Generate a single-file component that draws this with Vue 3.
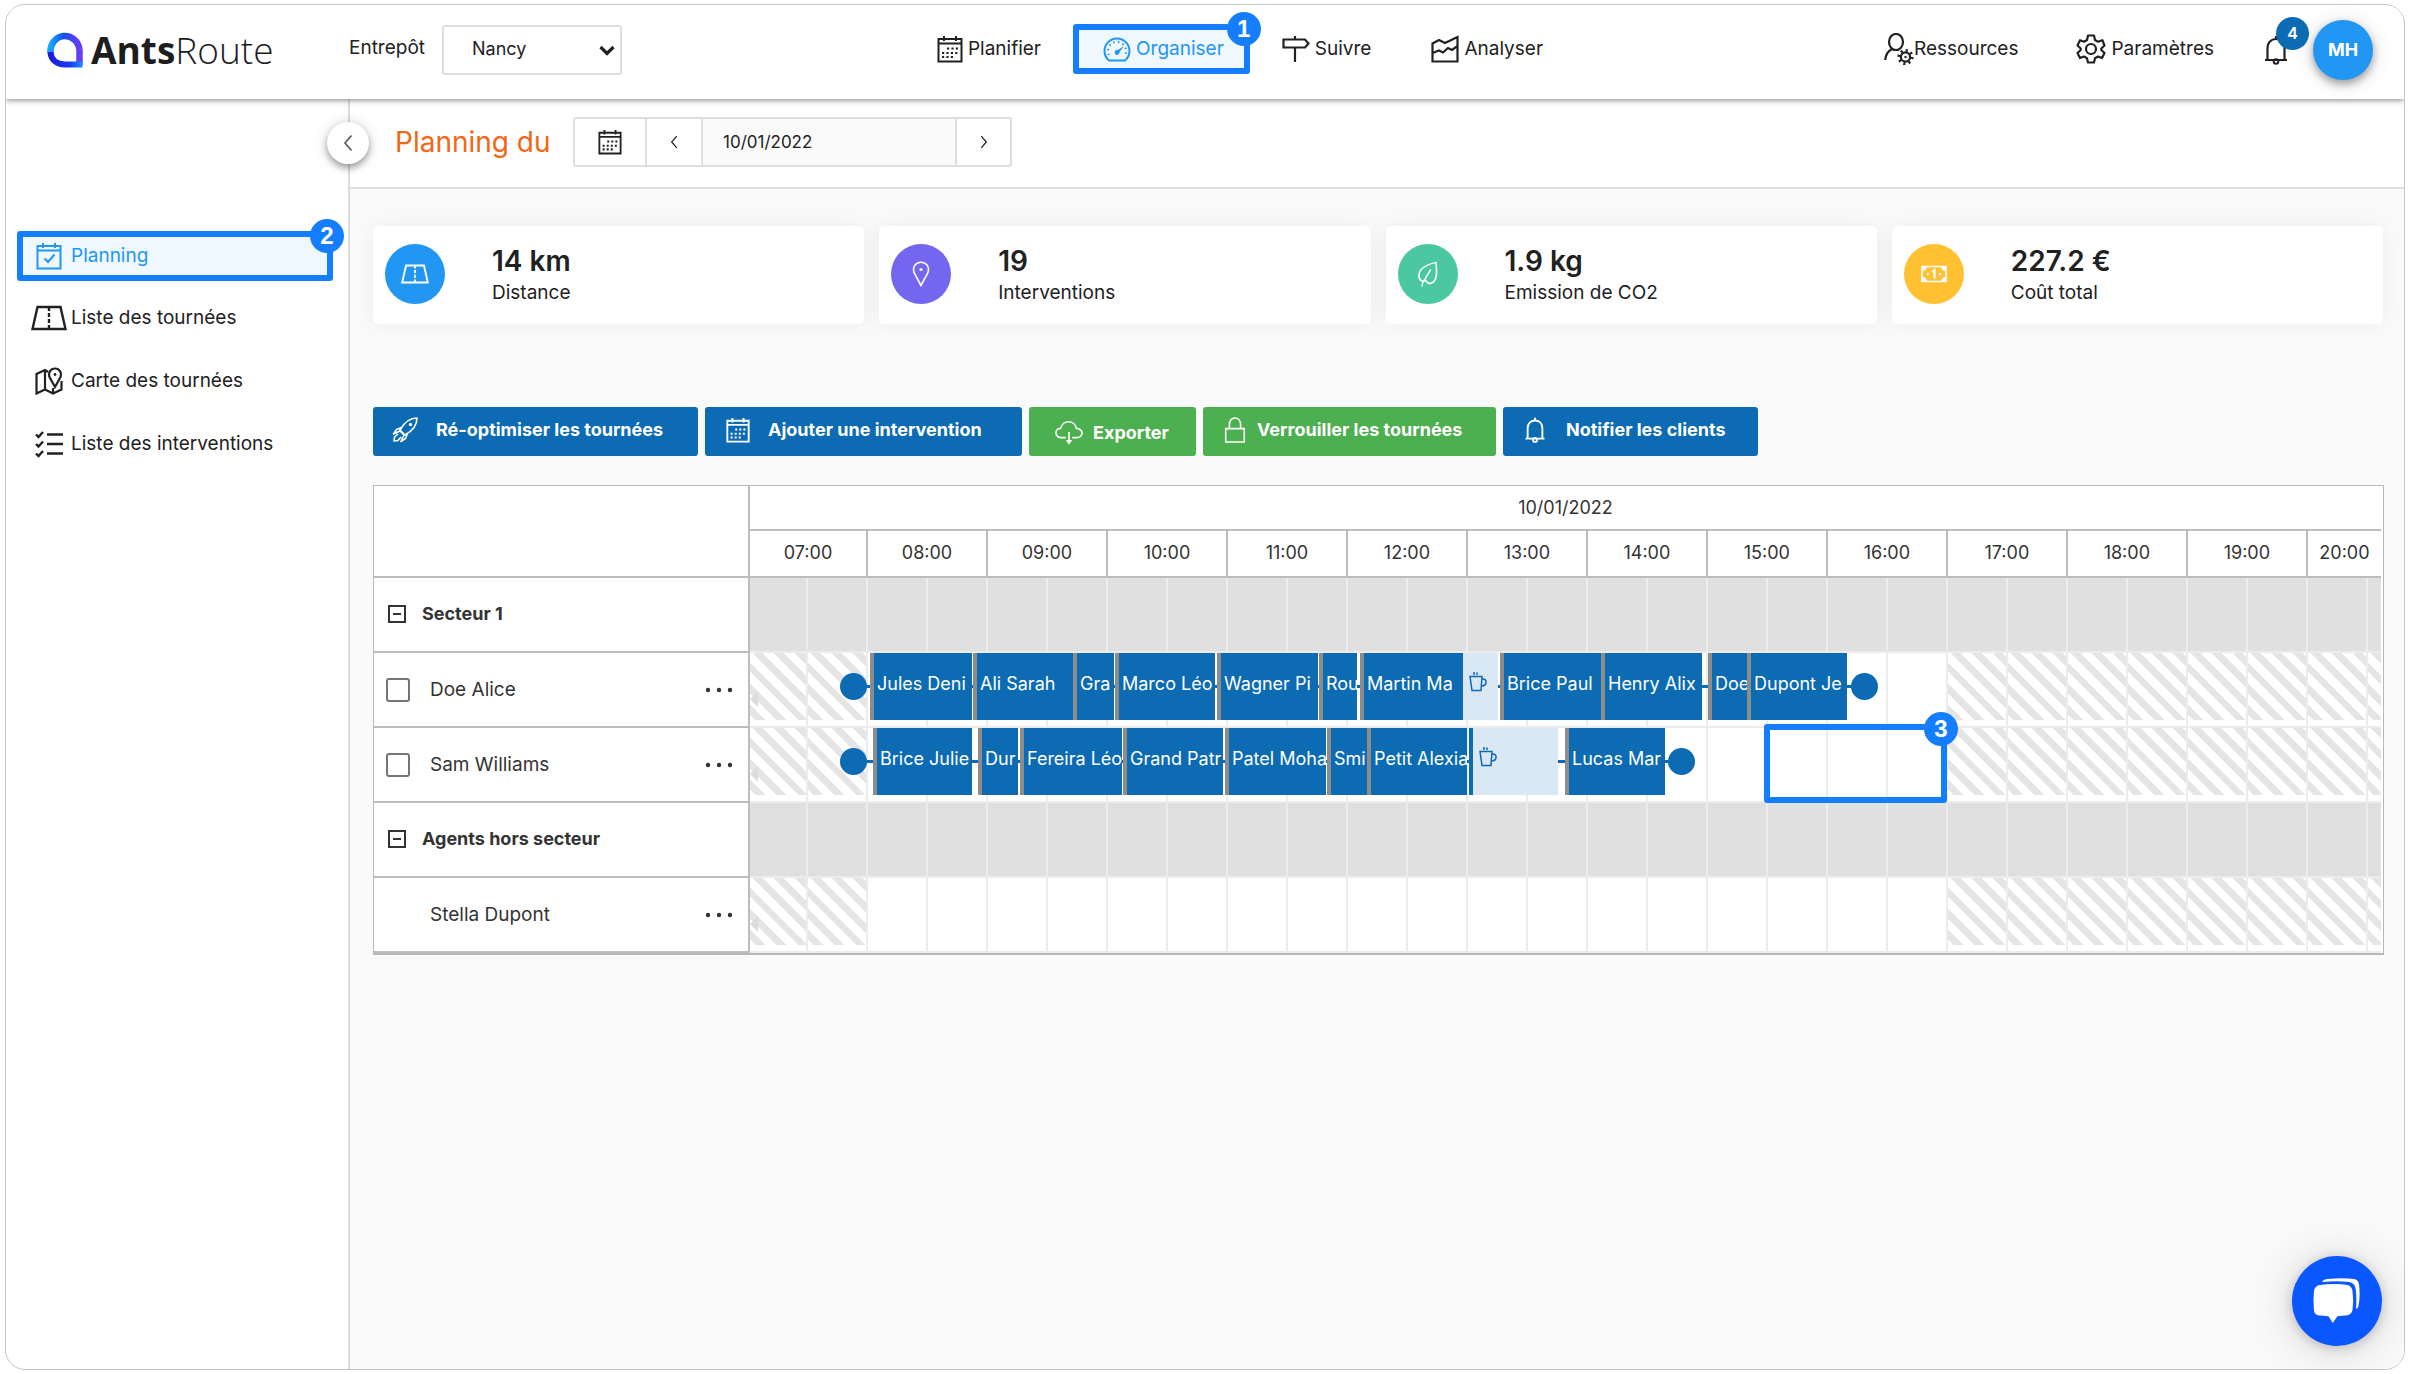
<script setup>
import { ref } from 'vue'

const depot = ref('Nancy')
const day = ref('10/01/2022')

const sideLinks = [
  { icon: 'i-calcheck', label: 'Planning', active: true },
  { icon: 'i-road', label: 'Liste des tournées' },
  { icon: 'i-map', label: 'Carte des tournées' },
  { icon: 'i-list', label: 'Liste des interventions' }
]

const stats = [
  { icon: 'i-road', tone: 'blue', value: '14 km', label: 'Distance' },
  { icon: 'i-pin', tone: 'violet', value: '19', label: 'Interventions' },
  { icon: 'i-leaf', tone: 'teal', value: '1.9 kg', label: 'Emission de CO2' },
  { icon: 'i-money', tone: 'amber', value: '227.2 €', label: 'Coût total' }
]

const hours = ['07:00', '08:00', '09:00', '10:00', '11:00', '12:00', '13:00', '14:00', '15:00', '16:00', '17:00', '18:00', '19:00', '20:00']

// The visible axis is cut into half-minute ticks, starting just after 07:00.
const TICKS = 1631
const pct = (t) => (t / TICKS) * 100 + '%'
const span = (from, to) => ({ left: pct(from), width: pct(to - from) })

const slots = []
for (let edge = 0, next = 58; edge < TICKS; edge = next, next = Math.min(next + 60, TICKS)) {
  slots.push({ size: next - edge, closed: next <= 118 || edge >= 1198, last: next === TICKS })
}

const rows = [
  { type: 'sector', name: 'Secteur 1' },
  {
    type: 'agent', name: 'Doe Alice', check: true, from: 103, to: 1114,
    visits: [
      [120, 222, 'Jules Deni'], [223, 323, 'Ali Sarah'], [323, 364, 'Gra'], [365, 465, 'Marco Léo'],
      [467, 568, 'Wagner Pi'], [569, 607, 'Rou'], [610, 713, 'Martin Ma'],
      [750, 851, 'Brice Paul'], [851, 952, 'Henry Alix'], [958, 997, 'Doe'], [997, 1097, 'Dupont Je']
    ],
    pause: [713, 748]
  },
  {
    type: 'agent', name: 'Sam Williams', check: true, from: 103, to: 931, slot: true,
    visits: [
      [123, 222, 'Brice Julie'], [228, 268, 'Dur'], [270, 372, 'Fereira Léo'], [373, 473, 'Grand Patr'],
      [475, 576, 'Patel Moha'], [577, 617, 'Smi'], [617, 717, 'Petit Alexia'], [815, 915, 'Lucas Mar']
    ],
    stub: [719, 723],
    pause: [723, 808]
  },
  { type: 'sector', name: 'Agents hors secteur' },
  { type: 'agent', name: 'Stella Dupont', check: false, visits: [] }
]
</script>

<template>
  <svg class="defs" aria-hidden="true">
    <symbol id="i-cal" viewBox="0 0 26 28">
      <path d="M1.500 4H24.500V26.500H1.500ZM1.500 8.500H24.500M7 1V6M19 1V6" fill="none" stroke="currentColor" stroke-width="2" />
      <path d="M10 13.500H22M5 18H22M5 22H16" fill="none" stroke="currentColor" stroke-width="2.200" stroke-dasharray="2.200 2.200" />
    </symbol>
    <symbol id="i-calcheck" viewBox="0 0 26 28">
      <path d="M1.500 4H24.500V26.500H1.500ZM1.500 8.500H24.500M7 1V6M19 1V6M8.500 16.500L12 20L18.500 12.500" fill="none" stroke="currentColor" stroke-width="2" />
    </symbol>
    <symbol id="i-gauge" viewBox="0 0 28 26">
      <path d="M6 24.500A12.500 12.500 0 1 1 22 24.500Z" fill="none" stroke="currentColor" stroke-width="2" stroke-linejoin="round" />
      <path d="M6 19A9 9 0 1 1 22 19" fill="none" stroke="currentColor" stroke-width="2" stroke-dasharray="1.500 3.300" />
      <path d="M12.500 15.500L21 10L15.500 17.500Z" fill="currentColor" />
      <circle cx="14" cy="16.500" r="2.400" fill="currentColor" />
    </symbol>
    <symbol id="i-sign" viewBox="0 0 28 28">
      <path d="M1.500 4.500H23L26.500 8.500L23 12.500H1.500ZM13 1V4.500M13 12.500V27" fill="none" stroke="currentColor" stroke-width="2.200" />
    </symbol>
    <symbol id="i-chart" viewBox="0 0 28 28">
      <path d="M1.500 8.500L8 5L14 8L26.500 2V26.500H1.500ZM1.500 18L8 15.500L12 17.500L17 13L21 15L26.500 11" fill="none" stroke="currentColor" stroke-width="2.200" />
    </symbol>
    <symbol id="i-usercog" viewBox="0 0 30 32">
      <ellipse cx="12" cy="9" rx="7" ry="8" fill="none" stroke="currentColor" stroke-width="2.200" />
      <path d="M8 16Q2 19 1.200 27" fill="none" stroke="currentColor" stroke-width="2.200" />
      <circle cx="21.500" cy="24" r="4.600" fill="none" stroke="currentColor" stroke-width="2.200" />
      <circle cx="21.500" cy="24" r="6.600" fill="none" stroke="currentColor" stroke-width="3" stroke-dasharray="2.100 3.080" />
      <circle cx="21.500" cy="24" r="1.200" fill="currentColor" />
    </symbol>
    <symbol id="i-gear" viewBox="0 0 30 30">
      <path d="M12 1.500H18L19 6L22 7.700L26.400 6.200L28.500 11.500L25.300 14.500V16L28.500 19L26 24L22 22.500L19 24.200L18 28.500H12L11 24.200L8 22.500L4 24L1.500 19L4.700 16V14.500L1.500 11.500L4 6.200L8 7.700L11 6Z" fill="none" stroke="currentColor" stroke-width="2.200" stroke-linejoin="round" />
      <circle cx="15" cy="15" r="5" fill="none" stroke="currentColor" stroke-width="2.200" />
    </symbol>
    <symbol id="i-bell" viewBox="0 0 24 30">
      <path d="M1 25H23M3.500 25V13C3.500 7.500 7 4 12 4S20.500 7.500 20.500 13V25M12 1V4" fill="none" stroke="currentColor" stroke-width="2.200" />
      <circle cx="12" cy="26.500" r="2.300" fill="none" stroke="currentColor" stroke-width="2" />
    </symbol>
    <symbol id="i-road" viewBox="0 0 36 26">
      <path d="M6.500 2H29.500L34.500 24H1.500ZM18 3V6M18 8V12M18 14V18M18 20V24" fill="none" stroke="currentColor" stroke-width="2.400" />
    </symbol>
    <symbol id="i-map" viewBox="0 0 28 28">
      <path d="M13 5L10 3L1.500 7V26.500L10 22.500L18 26.500L26.500 22.500V14M10 3V22.500M18 21V26" fill="none" stroke="currentColor" stroke-width="2.200" />
      <path d="M20 20L15 11C12.500 6 15.500 1.500 20 1.500S27.500 6 25 11Z" fill="none" stroke="currentColor" stroke-width="2.200" />
      <circle cx="20" cy="7.500" r="1.400" fill="currentColor" />
    </symbol>
    <symbol id="i-list" viewBox="0 0 28 26">
      <path d="M12 3.500H28M12 13H28M12 22.500H28M1 3.500L3.500 6L8 1M1 13L3.500 15.500L8 10.500M1 22.500L3.500 25L8 20" fill="none" stroke="currentColor" stroke-width="2.400" />
    </symbol>
    <symbol id="i-pin" viewBox="0 0 18 26">
      <path d="M9 24.500L2.500 12.500C-0.500 6 4 1.200 9 1.200S18.500 6 15.500 12.500Z" fill="none" stroke="currentColor" stroke-width="1.600" />
      <circle cx="9" cy="8.500" r="1.600" fill="currentColor" />
    </symbol>
    <symbol id="i-leaf" viewBox="0 0 24 28">
      <path d="M20.500 1.500C10 4 2 9 2.200 16C2.500 21.500 7 23 9 20.500C11 24 14.500 25.500 18 22.500C23 17.500 21 8 20.500 1.500Z" fill="none" stroke="currentColor" stroke-width="1.600" />
      <path d="M15 9L9 19C6.500 22 5.500 24 5.500 27.500" fill="none" stroke="currentColor" stroke-width="1.600" />
    </symbol>
    <symbol id="i-money" viewBox="0 0 28 18">
      <path d="M2 1.500H26V16.500H2Z" fill="none" stroke="currentColor" stroke-width="1.600" />
      <path d="M2 1.500H7A5 5 0 0 1 2 6ZM26 1.500H21A5 5 0 0 0 26 6ZM2 16.500H7A5 5 0 0 0 2 12ZM26 16.500H21A5 5 0 0 1 26 12Z" fill="currentColor" />
      <path d="M12 7L14.500 5V13.500" fill="none" stroke="currentColor" stroke-width="2" />
      <circle cx="8" cy="9" r="1.300" fill="currentColor" />
      <circle cx="20" cy="9" r="1.300" fill="currentColor" />
    </symbol>
    <symbol id="i-rocket" viewBox="0 0 26 26">
      <path d="M25 1C18 1 13 4 8 13L13 18C22 13 25 8 25 1ZM9.500 10.500L4.500 12.500L1.500 17L8 14M15.500 16.500L13.500 21.500L9 24.500L12 18M6 17L2.500 20L2 24L6 23.500L9 20M8 14L12 18" fill="none" stroke="currentColor" stroke-width="1.600" stroke-linejoin="round" />
      <circle cx="18.500" cy="7.500" r="1.700" fill="currentColor" />
    </symbol>
    <symbol id="i-cloud" viewBox="0 0 30 26">
      <path d="M11.500 18H6.500C3 18 1 15.500 1 12.500S3.500 8 6 8C7 4 10.500 1 14.500 1S22 4 23 8C26.500 8 29 10.500 29 13S26.500 18 23.500 18H18.500M15 12V22" fill="none" stroke="currentColor" stroke-width="1.700" />
      <path d="M11.500 20.500H18.500L15 25.500Z" fill="currentColor" />
    </symbol>
    <symbol id="i-lock" viewBox="0 0 22 28">
      <path d="M1 12.500H21V27H1ZM5 12.500V8C5 4 7.500 1 11 1S17 4 17 8V12.500" fill="none" stroke="currentColor" stroke-width="1.700" />
    </symbol>
    <symbol id="i-left" viewBox="0 0 10 18">
      <path d="M8.500 1.500L2 9L8.500 16.500" fill="none" stroke="currentColor" stroke-width="1.600" />
    </symbol>
    <symbol id="i-right" viewBox="0 0 10 18">
      <path d="M1.500 1.500L8 9L1.500 16.500" fill="none" stroke="currentColor" stroke-width="1.600" />
    </symbol>
    <symbol id="i-down" viewBox="0 0 16 11">
      <path d="M1.500 2L8 8.500L14.500 2" fill="none" stroke="currentColor" stroke-width="3.200" />
    </symbol>
    <symbol id="i-minus" viewBox="0 0 18 18">
      <path d="M1 1H17V17H1ZM5 9H13" fill="none" stroke="currentColor" stroke-width="2" />
    </symbol>
    <symbol id="i-dots" viewBox="0 0 28 6">
      <circle cx="3" cy="3" r="2.200" fill="currentColor" /><circle cx="14" cy="3" r="2.200" fill="currentColor" /><circle cx="25" cy="3" r="2.200" fill="currentColor" />
    </symbol>
    <symbol id="i-cup" viewBox="0 0 18 20">
      <path d="M1 4.500H13L12 18.500H3ZM13 7C18.500 6 18.500 14 12.500 14M5 0V3M8 0.500V3" fill="none" stroke="currentColor" stroke-width="1.500" />
    </symbol>
    <symbol id="i-chat" viewBox="0 0 48 46">
      <path d="M7 6Q24 4 37 6Q41 7 42 12Q43.500 22 42 32Q41 36 37 37Q31 37.600 26 38L21 45L16.500 38Q10 37.700 5 37Q1.500 36 1 32Q0 21 1 12Q2 7 7 6Z" fill="#fff" transform="translate(0 1) scale(.94 .98)" />
      <path d="M9 4Q10 1.500 14 1Q30 -0.500 41 1Q45 1.500 46 6Q47.500 18 45.500 28Q45 30.500 43 31Q44 18 42.500 10Q41.500 5 36 4Q24 2.500 9 4Z" fill="#fff" />
    </symbol>
  </svg>

  <div class="frame">
    <header class="topbar">
      <div class="brand-zone">
        <a href="#" class="brand">
          <svg class="brand-mark" viewBox="0 0 36 36" aria-hidden="true">
            <defs>
              <linearGradient id="g1" x1="0" y1="0" x2="1" y2="0">
                <stop offset="0" stop-color="#19a5ff" /><stop offset=".45" stop-color="#1450e6" /><stop offset="1" stop-color="#6a3df5" />
              </linearGradient>
              <linearGradient id="g2" x1="0" y1="0" x2="1" y2="0">
                <stop offset="0" stop-color="#1b1be0" /><stop offset=".6" stop-color="#1a3cf5" /><stop offset="1" stop-color="#1e8cff" />
              </linearGradient>
            </defs>
            <path d="M3.500 21A14.500 15.500 0 0 1 32.500 18V33" fill="none" stroke="url(#g1)" stroke-width="6.500" />
            <path d="M3.500 20C4 28 10 32.500 18 32.500H35.500" fill="none" stroke="url(#g2)" stroke-width="6" />
          </svg>
          <span class="brand-name"><b>Ants</b>Route</span>
        </a>
        <label class="depot-label" for="depot">Entrepôt</label>
        <span class="select-wrap">
          <select id="depot" v-model="depot"><option>Nancy</option></select>
          <svg class="select-arrow" aria-hidden="true"><use href="#i-down" /></svg>
        </span>
      </div>
      <nav class="main-nav">
        <a href="#"><svg class="ic ic-26"><use href="#i-cal" /></svg>Planifier</a>
        <a href="#" class="marked current"><svg class="ic ic-28"><use href="#i-gauge" /></svg>Organiser<span class="step">1</span></a>
        <a href="#"><svg class="ic ic-28"><use href="#i-sign" /></svg>Suivre</a>
        <a href="#"><svg class="ic ic-28"><use href="#i-chart" /></svg>Analyser</a>
      </nav>
      <div class="tools">
        <a href="#" class="tight"><svg class="ic ic-30"><use href="#i-usercog" /></svg>Ressources</a>
        <a href="#"><svg class="ic ic-30"><use href="#i-gear" /></svg>Paramètres</a>
        <button class="bell" aria-label="Notifications"><svg class="ic ic-bell"><use href="#i-bell" /></svg><span class="count">4</span></button>
        <button class="avatar">MH</button>
      </div>
    </header>

    <div class="body">
      <aside class="sidebar">
        <nav>
          <a v-for="l in sideLinks" :key="l.label" href="#" :class="{ marked: l.active, current: l.active }">
            <svg class="ic side-ic" :class="{ wide: l.icon === 'i-road' }"><use :href="'#' + l.icon" /></svg>{{ l.label }}
            <span v-if="l.active" class="step">2</span>
          </a>
        </nav>
        <button class="collapse" aria-label="Replier le menu"><svg class="chev-lg"><use href="#i-left" /></svg></button>
      </aside>

      <main class="content">
        <div class="datebar">
          <h1>Planning du</h1>
          <div class="date-group">
            <button class="cal-btn" aria-label="Calendrier"><svg class="ic-24"><use href="#i-cal" /></svg></button>
            <button class="prev" aria-label="Jour précédent"><svg class="chev"><use href="#i-left" /></svg></button>
            <input v-model="day" type="text" aria-label="Date" />
            <button class="next" aria-label="Jour suivant"><svg class="chev"><use href="#i-right" /></svg></button>
          </div>
        </div>

        <section class="stats">
          <article v-for="s in stats" :key="s.label" class="stat">
            <span class="disc" :class="s.tone"><svg class="disc-ic"><use :href="'#' + s.icon" /></svg></span>
            <div>
              <strong>{{ s.value }}</strong>
              <span class="stat-label">{{ s.label }}</span>
            </div>
          </article>
        </section>

        <div class="actions">
          <button class="btn optimise"><svg class="btn-ic"><use href="#i-rocket" /></svg>Ré-optimiser les tournées</button>
          <button class="btn add"><svg class="btn-ic"><use href="#i-cal" /></svg>Ajouter une intervention</button>
          <button class="btn green export"><svg class="btn-ic"><use href="#i-cloud" /></svg>Exporter</button>
          <button class="btn green lock"><svg class="btn-ic"><use href="#i-lock" /></svg>Verrouiller les tournées</button>
          <button class="btn notify"><svg class="btn-ic"><use href="#i-bell" /></svg>Notifier les clients</button>
        </div>

        <div class="planner">
          <table>
            <colgroup>
              <col class="c-name" /><col class="c-first" /><col v-for="n in 12" :key="n" /><col class="c-last" />
            </colgroup>
            <thead>
              <tr class="day-row"><td rowspan="2" class="corner"></td><th colspan="14">10/01/2022</th></tr>
              <tr class="hour-row"><th v-for="h in hours" :key="h">{{ h }}</th></tr>
            </thead>
            <tbody>
              <tr v-for="r in rows" :key="r.name" :class="r.type">
                <th scope="row">
                  <div v-if="r.type === 'sector'" class="who">
                    <button class="toggle" :aria-label="'Replier ' + r.name"><svg class="minus"><use href="#i-minus" /></svg></button>
                    <span>{{ r.name }}</span>
                  </div>
                  <div v-else class="who">
                    <label><input v-if="r.check" type="checkbox" /><span v-else class="no-check"></span>{{ r.name }}</label>
                    <button class="more" :aria-label="'Options ' + r.name"><svg class="dots"><use href="#i-dots" /></svg></button>
                  </div>
                </th>
                <td colspan="14">
                  <div class="track">
                    <span v-for="(s, i) in slots" :key="i" class="slot" :class="{ closed: s.closed && r.type === 'agent', last: s.last }" :style="{ flexGrow: s.size }"></span>
                    <template v-if="r.type === 'agent'">
                      <span class="earlier"></span>
                      <template v-if="r.visits.length">
                        <span class="trip" :style="span(r.from, r.to)"></span>
                        <span class="stop" :style="{ left: pct(r.from) }"></span>
                        <span class="stop" :style="{ left: pct(r.to) }"></span>
                        <span v-for="v in r.visits" :key="v[0]" class="visit" :style="span(v[0], v[1])">{{ v[2] }}</span>
                        <span v-if="r.stub" class="stub" :style="span(r.stub[0], r.stub[1])"></span>
                        <span class="pause" :style="span(r.pause[0], r.pause[1])"><svg class="cup"><use href="#i-cup" /></svg></span>
                      </template>
                      <span v-if="r.slot" class="free-slot" :style="span(1014, 1197)"><span class="step">3</span></span>
                    </template>
                  </div>
                </td>
              </tr>
            </tbody>
          </table>
        </div>
      </main>
    </div>

    <button class="chat" aria-label="Ouvrir la discussion"><svg class="chat-ic"><use href="#i-chat" /></svg></button>
  </div>
</template>

<style>
body { margin: 0; background: #fff; }
</style>

<style scoped>
* { box-sizing: border-box; }
.defs { position: absolute; width: 0; height: 0; }
.frame {
  position: relative;
  display: flex;
  flex-direction: column;
  min-height: calc(100vh - 8px);
  margin: 4px 4px 4px 5px;
  border: 1px solid #c6c6c6;
  border-radius: 20px;
  overflow: hidden;
  background: #fff;
  font: 19px/24px Inter, "Noto Sans", sans-serif;
  color: #212121;
}
button, input, select { font: inherit; color: inherit; }
button { padding: 0; border: 0; background: none; cursor: pointer; }
a { color: inherit; text-decoration: none; }
svg { display: block; flex: none; }
.ic-24 { width: 24px; height: 26px; }
.ic-26 { width: 26px; height: 28px; }
.ic-28 { width: 28px; height: 28px; }
.ic-30 { width: 30px; height: 32px; }
.ic-bell { width: 24px; height: 30px; }

.topbar {
  position: relative;
  z-index: 2;
  display: flex;
  align-items: center;
  justify-content: space-between;
  height: 94px;
  padding: 0 31px 4px 41px;
  box-shadow: 0 1px 6px rgba(0, 0, 0, .5);
  background: #fff;
}
.brand-zone { display: flex; align-items: center; }
.brand { display: flex; align-items: center; gap: 8px; width: 302px; }
.brand-mark { width: 36px; height: 36px; }
.brand-name { font: 300 37px/40px "Open Sans", sans-serif; color: #1d1d1f; }
.brand-name b { font-weight: 700; }
.depot-label { width: 93px; padding-bottom: 4px; }
.select-wrap { position: relative; }
select {
  width: 180px;
  height: 50px;
  padding: 0 28px 2px;
  appearance: none;
  border: 2px solid #dedede;
  border-radius: 3px;
  background: #fff;
  font-size: 18px;
}
.select-arrow { position: absolute; right: 7px; top: 20px; width: 16px; height: 11px; pointer-events: none; }
.main-nav { display: flex; align-items: center; gap: 60px; padding: 0 26px 2px 0; }
.main-nav a, .tools a { display: flex; align-items: center; gap: 5px; }
.tools a { padding-bottom: 2px; }
.tools a.tight { gap: 0; }
.main-nav .marked { height: 50px; margin: 0 -28px; padding: 0 20px 0 24px; }
.marked { position: relative; border: 6px solid #147eff; border-radius: 3px; background: #eff7ff; }
.current { color: #2196f3; }
.step {
  position: absolute;
  top: -18px;
  right: -17px;
  width: 34px;
  height: 34px;
  border-radius: 50%;
  background: #147eff;
  color: #fff;
  text-align: center;
  font: 700 24px/34px "Liberation Sans", sans-serif;
}
.tools { display: flex; align-items: center; }
.tools a { margin-right: 58px; }
.tools a + a { margin-right: 50px; }
.bell { position: relative; margin-right: 25px; }
.count {
  position: absolute;
  left: 12px;
  top: -18px;
  width: 33px;
  height: 33px;
  border-radius: 50%;
  background: #0c6bb3;
  color: #fff;
  font-size: 16px;
  font-weight: 600;
  line-height: 33px;
}
.avatar {
  width: 60px;
  height: 60px;
  border-radius: 50%;
  background: #2196f3;
  color: #fff;
  font-size: 18px;
  font-weight: 700;
  box-shadow: 0 4px 8px rgba(0, 0, 0, .35), 0 2px 22px rgba(0, 0, 0, .12);
}

.body { display: flex; flex: 1; }
.sidebar { position: relative; flex: none; width: 344px; padding-top: 132px; border-right: 2px solid #dcdcdc; }
.sidebar a { display: flex; align-items: center; height: 63px; padding-left: 24px; }
.sidebar a.marked { width: 316px; height: 50px; margin: 0 0 5px 11px; padding-left: 7px; }
.side-ic { width: 28px; height: 28px; margin: 0 8px 0 5px; }
.side-ic.wide { width: 36px; height: 26px; margin: 0 4px 0 1px; }
.collapse {
  position: absolute;
  top: 23px;
  right: -21px;
  z-index: 1;
  display: grid;
  place-items: center;
  width: 42px;
  height: 42px;
  border-radius: 50%;
  background: #fff;
  color: #555;
  box-shadow: 0 4px 6px rgba(0, 0, 0, .3), 0 1px 14px rgba(0, 0, 0, .18);
}
.chev-lg { width: 10px; height: 20px; }
.chev { width: 8px; height: 14px; }

.content { flex: 1; min-width: 0; background: #fafafa; }
.datebar { display: flex; align-items: center; height: 90px; padding: 0 0 2px 45px; border-bottom: 2px solid #dedede; background: #fff; }
h1 { width: 178px; margin: 0; color: #f26716; font-size: 28px; font-weight: 400; line-height: 32px; white-space: nowrap; }
.date-group { display: flex; height: 50px; border: 2px solid #dedede; border-radius: 3px; }
.date-group button { display: grid; place-items: center; }
.cal-btn { width: 70px; }
.prev { width: 56px; border-left: 2px solid #dedede; }
.next { width: 53px; }
.date-group input { width: 256px; padding: 0 20px; border: solid #dedede; border-width: 0 2px; background: #fafafa; font-size: 17px; }

.stats { display: grid; grid-template-columns: repeat(4, 1fr); gap: 15px; padding: 37px 21px 0 23px; }
.stat { display: flex; align-items: center; gap: 47px; height: 98px; padding: 0 12px 2px; border-radius: 5px; background: #fff; box-shadow: 0 0 24px rgba(34, 41, 80, .06); }
.stat strong { display: block; padding-top: 2px; font-size: 28px; font-weight: 600; line-height: 36px; }
.stat-label { display: block; line-height: 28px; }
.disc { display: grid; place-items: center; width: 60px; height: 60px; border-radius: 50%; color: #fff; }
.disc-ic { width: 28px; height: 26px; }
.blue { background: #2196f3; }
.violet { background: #7367f0; }
.teal { background: #4bc8a0; }
.amber { background: #ffc131; }

.actions { display: flex; gap: 7px; padding: 83px 20px 0 23px; }
.btn { display: flex; align-items: center; height: 49px; padding-bottom: 4px; border-radius: 3px; background: #0c6bb3; color: #fff; font-size: 18px; font-weight: 700; white-space: nowrap; }
.btn-ic { width: 28px; height: 26px; }
.green { background: #4caf50; }
.optimise { width: 325px; padding-left: 18px; gap: 17px; }
.add { width: 317px; padding-left: 19px; gap: 16px; }
.export { width: 167px; padding: 2px 0 0 26px; gap: 10px; }
.lock { width: 293px; padding-left: 18px; gap: 8px; }
.notify { width: 255px; padding-left: 18px; gap: 17px; }

.planner { margin: 29px 20px 40px 23px; padding-right: 2px; border: 1px solid #b8b8b8; border-bottom-width: 2px; background: #fff; }
table { width: 100%; table-layout: fixed; border-collapse: separate; border-spacing: 0; color: #333; }
th, td { padding: 0; font-weight: 400; }
.c-name { width: 376px; }
.c-first { width: 118px; }
.c-last { width: 73px; }
.corner, tbody th { border-right: 2px solid #bdbdbd; border-bottom: 2px solid #bdbdbd; }
.day-row th { height: 45px; border-bottom: 2px solid #bdbdbd; font-size: 18px; }
.hour-row th { height: 47px; padding-bottom: 2px; border-right: 2px solid #bdbdbd; border-bottom: 2px solid #bdbdbd; font-size: 18px; }
.hour-row th:last-child { border-right: 0; }
.who { display: flex; align-items: center; justify-content: space-between; height: 73px; padding: 0 15px 0 13px; }
.agent label { display: flex; align-items: center; gap: 21px; }
.agent input, .no-check { width: 24px; height: 24px; margin: 0 -1px; border: 2px solid #757575; border-radius: 3px; appearance: none; background: #fff; }
.no-check { border-color: transparent; }
.dots { width: 28px; height: 6px; }
.sector .who { justify-content: flex-start; gap: 16px; font-size: 18px; font-weight: 700; padding-bottom: 2px; }
.toggle { margin-left: 1px; }
.minus { width: 18px; height: 18px; }
.track { position: relative; display: flex; height: 75px; border-bottom: 2px solid #ececec; }
.sector .track { background: #e0e0e0; }
.slot { flex-basis: 0; border-right: 2px solid #ececec; }
.slot.last { border-right: 0; }
.slot.closed { background: repeating-linear-gradient(45deg, #fff 0 4px, #e5e5e5 4px 11px, #fff 11px 15px) no-repeat 0 0 / 100% 67px; }
.earlier { position: absolute; left: 0; top: 38px; border: solid transparent; border-width: 8px 8px 8px 0; border-right-color: #dcdcdc; }
.trip { position: absolute; top: 32px; height: 3px; background: #0c6bb3; }
.stop { position: absolute; top: 20px; width: 27px; height: 27px; margin-left: -13px; border-radius: 50%; background: #0c6bb3; }
.visit, .stub, .pause { position: absolute; top: 0; height: 67px; background: #0c6bb3; }
.visit { padding-left: 3px; border-left: 4px solid #8c8c8c; color: #fff; font-size: 18px; line-height: 61px; white-space: nowrap; overflow: hidden; }
.pause { background: #dae8f3; color: #0c6bb3; }
.cup { width: 18px; height: 20px; margin: 19px 0 0 6px; }
.free-slot { position: absolute; top: -4px; height: 79px; border: 6px solid #147eff; border-radius: 3px; }

.chat {
  position: absolute;
  right: 22px;
  bottom: 23px;
  display: grid;
  place-items: center;
  width: 90px;
  height: 90px;
  border-radius: 50%;
  background: #0a57ff;
  box-shadow: 0 2px 12px rgba(0, 0, 0, .2), 0 4px 50px rgba(0, 0, 0, .16);
}
.chat-ic { width: 48px; height: 46px; }
</style>
